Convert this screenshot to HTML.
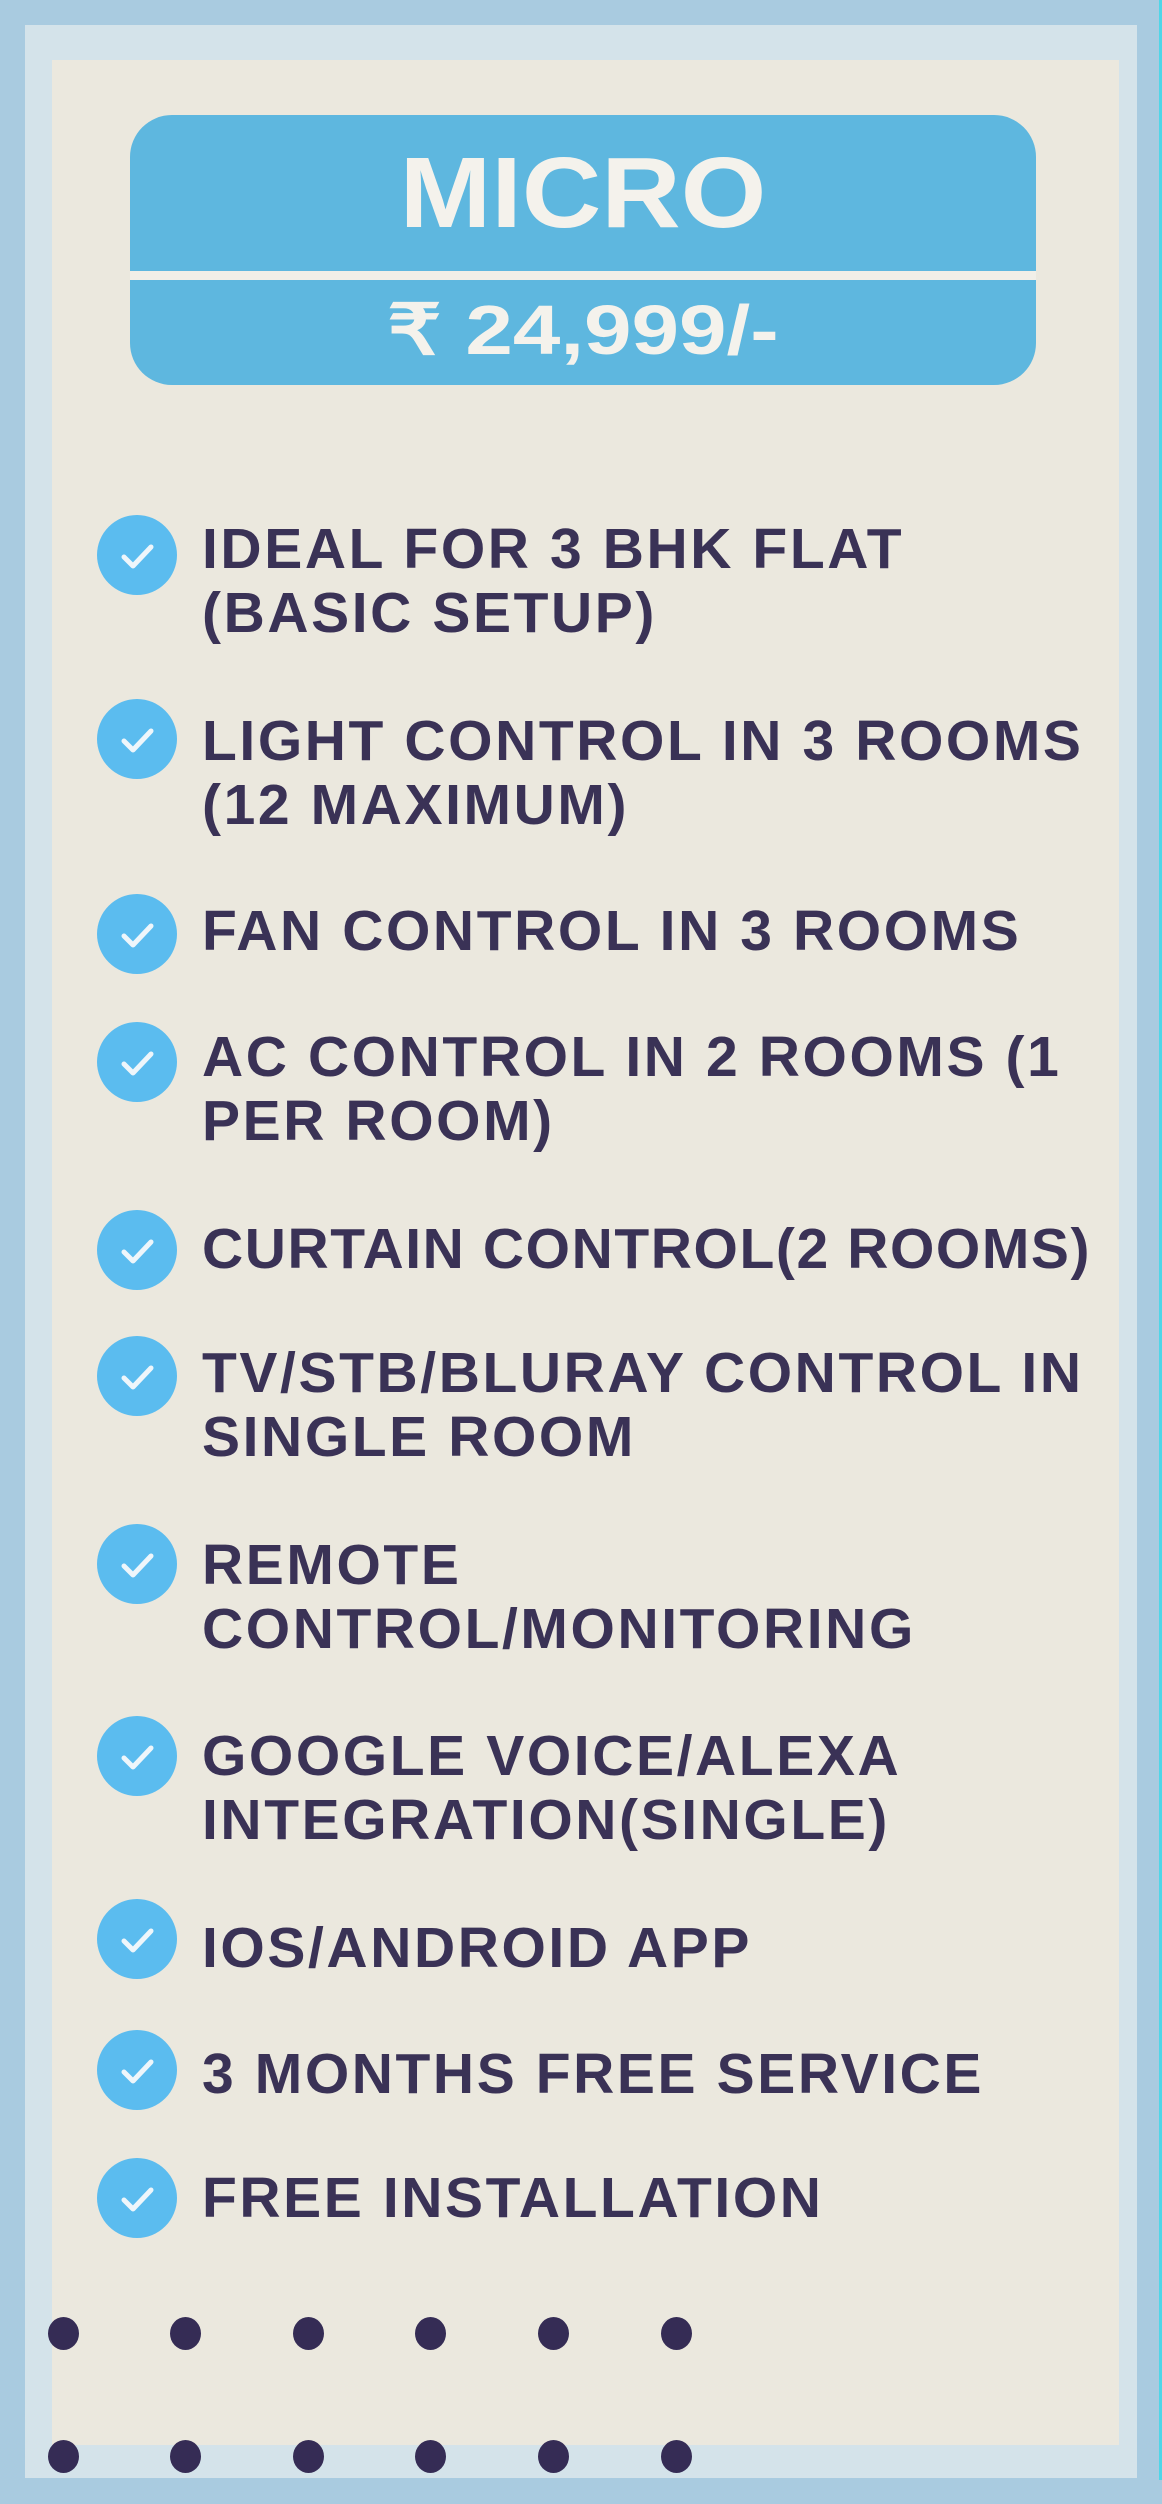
<!DOCTYPE html>
<html><head><meta charset="utf-8"><style>
html,body{margin:0;padding:0}
body{width:1162px;height:2504px;position:relative;overflow:hidden;background:#a9cbe0;font-family:"Liberation Sans",sans-serif}
.band{position:absolute;left:25px;top:25px;width:1112px;height:2453px;background:#d4e3ea}
.cream{position:absolute;left:52px;top:60px;width:1067px;height:2385px;background:#ebe8de}
.edge{position:absolute;right:0;top:0;width:3px;height:2480px;background:#4fd6e8}
.box{position:absolute;left:130px;top:115px;width:906px;height:270px;background:#5eb7df;border-radius:42px;overflow:hidden}
.t1{position:absolute;text-align:center;top:138px;color:#f4f2ec;font-weight:bold;font-size:100px;line-height:110px;transform:scaleX(1.1)}
.t2{position:absolute;text-align:center;top:292px;color:#f4f2ec;font-weight:bold;font-size:70px;line-height:76px;transform:scaleX(1.22)}
.it{position:absolute;left:202px;color:#3a3256;font-weight:bold;font-size:57px;line-height:64px;letter-spacing:2.6px;white-space:nowrap}
.ck{position:absolute;left:97px;width:80px;height:80px;border-radius:50%;background:#5bbcef}
.ck svg{position:absolute;left:0;top:0}
.dot{position:absolute;width:31px;height:33px;border-radius:50%;background:#352c55}
</style></head><body>
<div class="band"></div>
<div class="cream"></div>
<div class="edge"></div>
<div class="box"></div>
<div style="position:absolute;left:130px;top:271px;width:906px;height:9px;background:#f1efe8"></div>
<div class="t1" style="left:130px;width:906px">MICRO</div>
<div class="t2" style="left:130px;width:906px">₹ 24,999/-</div>

<div class="ck" style="top:515px"><svg width="80" height="80"><path d="M27 42 L36 51 L54 32" stroke="#eef6fb" stroke-width="5" fill="none" stroke-linecap="round" stroke-linejoin="round"/></svg></div>
<div class="it" style="top:517px">IDEAL FOR 3 BHK FLAT<br>(BASIC SETUP)</div>

<div class="ck" style="top:699px"><svg width="80" height="80"><path d="M27 42 L36 51 L54 32" stroke="#eef6fb" stroke-width="5" fill="none" stroke-linecap="round" stroke-linejoin="round"/></svg></div>
<div class="it" style="top:709px">LIGHT CONTROL IN 3 ROOMS<br>(12 MAXIMUM)</div>

<div class="ck" style="top:894px"><svg width="80" height="80"><path d="M27 42 L36 51 L54 32" stroke="#eef6fb" stroke-width="5" fill="none" stroke-linecap="round" stroke-linejoin="round"/></svg></div>
<div class="it" style="top:899px">FAN CONTROL IN 3 ROOMS</div>

<div class="ck" style="top:1022px"><svg width="80" height="80"><path d="M27 42 L36 51 L54 32" stroke="#eef6fb" stroke-width="5" fill="none" stroke-linecap="round" stroke-linejoin="round"/></svg></div>
<div class="it" style="top:1025px">AC CONTROL IN 2 ROOMS (1<br>PER ROOM)</div>

<div class="ck" style="top:1210px"><svg width="80" height="80"><path d="M27 42 L36 51 L54 32" stroke="#eef6fb" stroke-width="5" fill="none" stroke-linecap="round" stroke-linejoin="round"/></svg></div>
<div class="it" style="top:1217px;letter-spacing:1.6px">CURTAIN CONTROL(2 ROOMS)</div>

<div class="ck" style="top:1336px"><svg width="80" height="80"><path d="M27 42 L36 51 L54 32" stroke="#eef6fb" stroke-width="5" fill="none" stroke-linecap="round" stroke-linejoin="round"/></svg></div>
<div class="it" style="top:1341px">TV/STB/BLURAY CONTROL IN<br>SINGLE ROOM</div>

<div class="ck" style="top:1524px"><svg width="80" height="80"><path d="M27 42 L36 51 L54 32" stroke="#eef6fb" stroke-width="5" fill="none" stroke-linecap="round" stroke-linejoin="round"/></svg></div>
<div class="it" style="top:1533px">REMOTE<br>CONTROL/MONITORING</div>

<div class="ck" style="top:1716px"><svg width="80" height="80"><path d="M27 42 L36 51 L54 32" stroke="#eef6fb" stroke-width="5" fill="none" stroke-linecap="round" stroke-linejoin="round"/></svg></div>
<div class="it" style="top:1724px">GOOGLE VOICE/ALEXA<br>INTEGRATION(SINGLE)</div>

<div class="ck" style="top:1899px"><svg width="80" height="80"><path d="M27 42 L36 51 L54 32" stroke="#eef6fb" stroke-width="5" fill="none" stroke-linecap="round" stroke-linejoin="round"/></svg></div>
<div class="it" style="top:1916px">IOS/ANDROID APP</div>

<div class="ck" style="top:2030px"><svg width="80" height="80"><path d="M27 42 L36 51 L54 32" stroke="#eef6fb" stroke-width="5" fill="none" stroke-linecap="round" stroke-linejoin="round"/></svg></div>
<div class="it" style="top:2042px">3 MONTHS FREE SERVICE</div>

<div class="ck" style="top:2158px"><svg width="80" height="80"><path d="M27 42 L36 51 L54 32" stroke="#eef6fb" stroke-width="5" fill="none" stroke-linecap="round" stroke-linejoin="round"/></svg></div>
<div class="it" style="top:2166px">FREE INSTALLATION</div>

<div class="dot" style="left:48px;top:2317px"></div>
<div class="dot" style="left:170px;top:2317px"></div>
<div class="dot" style="left:293px;top:2317px"></div>
<div class="dot" style="left:415px;top:2317px"></div>
<div class="dot" style="left:538px;top:2317px"></div>
<div class="dot" style="left:661px;top:2317px"></div>
<div class="dot" style="left:48px;top:2440px"></div>
<div class="dot" style="left:170px;top:2440px"></div>
<div class="dot" style="left:293px;top:2440px"></div>
<div class="dot" style="left:415px;top:2440px"></div>
<div class="dot" style="left:538px;top:2440px"></div>
<div class="dot" style="left:661px;top:2440px"></div>
</body></html>
